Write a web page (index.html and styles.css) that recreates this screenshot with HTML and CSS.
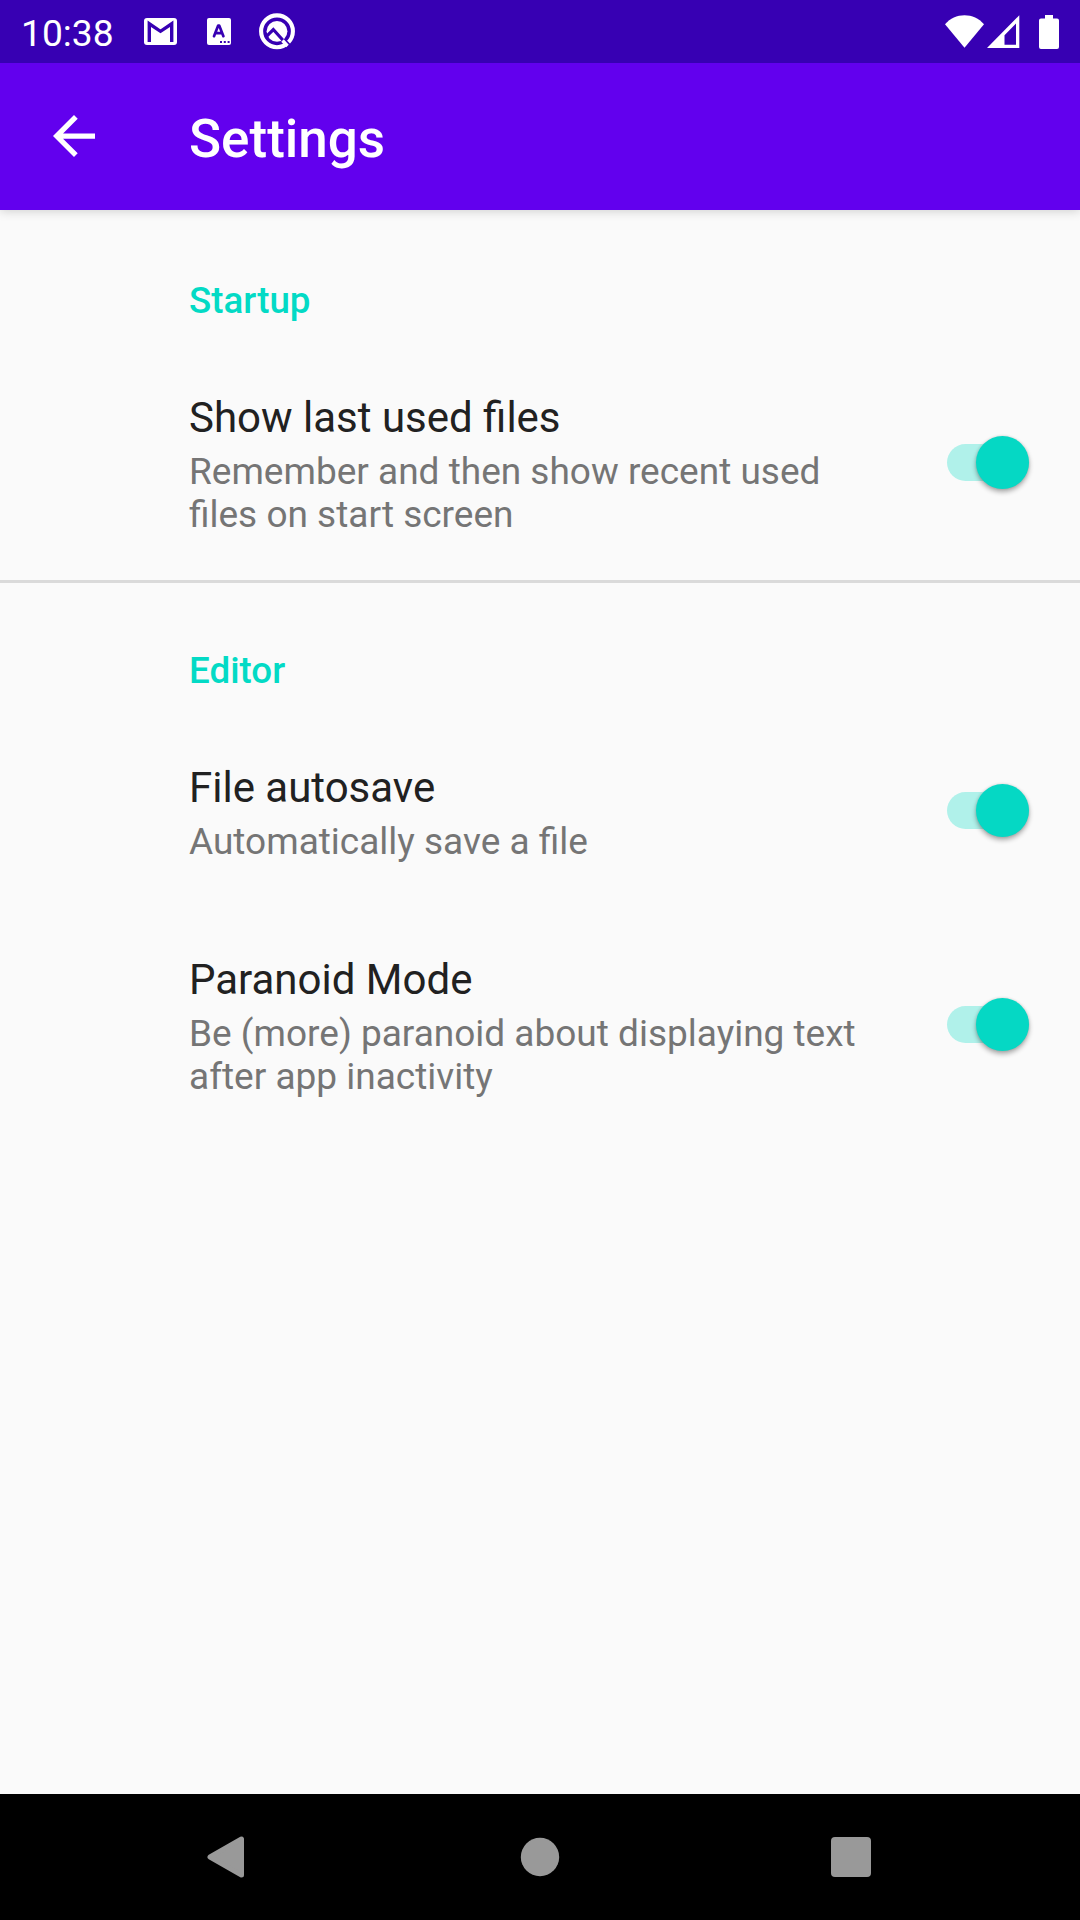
FILE: index.html
```html
<!DOCTYPE html>
<html lang="en">
<head>
<meta charset="utf-8">
<title>Settings</title>
<link rel="stylesheet" href="styles.css">
</head>
<body>
<div class="screen">
  <header class="status">
    <span class="clock">10:38</span>
    <div class="notifications">
      <svg width="33" height="27" viewBox="0 0 33 27">
        <rect width="33" height="27" rx="3" fill="#fff"/>
        <path d="M5.3 24V5.8L16.5 13.3 27.7 5.8V24" fill="none" stroke="#3700b3" stroke-width="3.4"/>
      </svg>
      <svg width="24" height="27" viewBox="0 0 24 27">
        <rect width="24" height="27" rx="2" fill="#fff"/>
        <path d="M7 18.2L11.2 7.5H12.2L16.4 18.2M8.8 15.2H14.6" fill="none" stroke="#3700b3" stroke-width="2.7" stroke-linecap="round" stroke-linejoin="round"/>
        <path d="M13 23h2v2h-2zM16.8 23h2v2h-2zM20.6 23h2v2h-2z" fill="#3700b3"/>
      </svg>
      <svg width="36" height="37" viewBox="0 0 36 37">
        <circle cx="18" cy="18.3" r="15.900" fill="none" stroke="#fff" stroke-width="4.100"/>
        <circle cx="18" cy="18.3" r="10.400" fill="#fff"/>
        <path d="M8 22.800L14.300 16.500 26 29.500" fill="none" stroke="#3700b3" stroke-width="3.200"/>
        <path d="M25 27.500L31.500 34.500" stroke="#3700b3" stroke-width="4.500"/>
        <path d="M23.500 27.500L28.500 33" stroke="#fff" stroke-width="3.400"/>
      </svg>
    </div>
    <div class="system">
      <svg class="wifi" width="39" height="34" viewBox="0 0 39 34">
        <path d="M0 9.200C5.200 3.200 12 .2 19.500 .2S33.800 3.200 39 9.200L19.500 32.800Z" fill="#fff"/>
      </svg>
      <svg class="signal" width="33" height="34" viewBox="0 0 33 34">
        <path d="M32.300 .3V33H0ZM29 8.400L17.500 20.200V29.800H29Z" fill="#fff" fill-rule="evenodd"/>
      </svg>
      <svg class="battery" width="20" height="34" viewBox="0 0 20 34">
        <path d="M6 0H14V3.500H18A2 2 0 0 1 20 5.500V32A2 2 0 0 1 18 34H2A2 2 0 0 1 0 32V5.500A2 2 0 0 1 2 3.500H6Z" fill="#fff"/>
      </svg>
    </div>
  </header>

  <div class="toolbar">
    <svg class="back" width="42" height="42" viewBox="4 4 16 16">
      <path d="M20 11H7.830l5.590-5.590L12 4l-8 8 8 8 1.410-1.410L7.830 13H20v-2z" fill="#fff"/>
    </svg>
    <h1 class="title">Settings</h1>
  </div>

  <main class="content">
    <section class="group">
      <h2 class="category">Startup</h2>
      <div class="item item-tall">
        <div class="text">
          <div class="name">Show last used files</div>
          <div class="summary">Remember and then show recent used<br>files on start screen</div>
        </div>
        <div class="switch"><div class="thumb"></div></div>
      </div>
    </section>
    <section class="group group-divided">
      <h2 class="category">Editor</h2>
      <div class="item">
        <div class="text">
          <div class="name">File autosave</div>
          <div class="summary">Automatically save a file</div>
        </div>
        <div class="switch"><div class="thumb"></div></div>
      </div>
      <div class="item item-tall">
        <div class="text">
          <div class="name">Paranoid Mode</div>
          <div class="summary">Be (more) paranoid about displaying text<br>after app inactivity</div>
        </div>
        <div class="switch"><div class="thumb"></div></div>
      </div>
    </section>
  </main>

  <nav class="navbar">
    <div class="navcell"><svg width="38" height="42" viewBox="0 0 38 42"><path d="M3 21L34.500 3V39Z" fill="#999" stroke="#999" stroke-width="5" stroke-linejoin="round"/></svg></div>
    <div class="navcell"><svg width="40" height="40" viewBox="0 0 40 40"><circle cx="20" cy="20" r="19.200" fill="#999"/></svg></div>
    <div class="navcell"><svg width="40" height="40" viewBox="0 0 40 40"><rect width="40" height="40" rx="4" fill="#999"/></svg></div>
  </nav>
</div>
</body>
</html>
```
FILE: styles.css
```css
* { box-sizing: border-box; margin: 0; padding: 0; }

body {
  font-family: Roboto, "Liberation Sans", sans-serif;
  background: #fafafa;
}

svg { display: block; flex: none; }

.screen {
  width: 1080px;
  height: 1920px;
  display: flex;
  flex-direction: column;
  overflow: hidden;
}

.status {
  height: 63px;
  flex: none;
  display: flex;
  align-items: center;
  padding: 0 21px;
  background: #3700b3;
  color: #fff;
  z-index: 2;
}

.clock {
  width: 123px;
  font-size: 37.2px;
  line-height: 43px;
  padding-top: 3px;
}

.notifications { display: flex; align-items: center; }
.notifications svg + svg { margin-left: 30px; }
.notifications svg:last-child { margin-left: 28px; }

.system { display: flex; align-items: center; margin-left: auto; }
.signal { margin-left: 3px; }
.battery { margin-left: 19px; }

.toolbar {
  height: 147px;
  flex: none;
  display: flex;
  align-items: center;
  padding-left: 53px;
  background: #6200ee;
  color: #fff;
  box-shadow: 0 1px 10px rgba(0, 0, 0, .18);
  z-index: 1;
}

.back { margin-bottom: 1px; }

.title {
  margin-left: 94px;
  padding-top: 4px;
  font-size: 53px;
  font-weight: 500;
  line-height: 62px;
}

.content { flex: 1; }

.group-divided { box-shadow: inset 0 3px #dadada; }

.category {
  height: 134.5px;
  padding: 69px 0 0 189px;
  font-size: 36.75px;
  font-weight: 500;
  line-height: 43px;
  color: #03dac5;
}

.item {
  height: 192.5px;
  display: flex;
  align-items: center;
  justify-content: space-between;
  padding: 0 51px 0 189px;
}

.item-tall { height: 235px; }

.text {
  padding-top: 5px;
  white-space: nowrap;
}

.name {
  font-size: 42px;
  line-height: 50px;
  color: #212121;
}

.summary {
  margin-top: 7px;
  font-size: 37px;
  line-height: 43px;
  color: #757575;
}

.switch {
  width: 82px;
  height: 37px;
  display: flex;
  align-items: center;
  justify-content: flex-end;
  border-radius: 19px;
  background: #b0f1ea;
}

.thumb {
  width: 53px;
  height: 53px;
  flex: none;
  border-radius: 50%;
  background: #05d8c4;
  box-shadow: 0 3px 5px rgba(0, 0, 0, .32), 0 0 3px rgba(0, 0, 0, .12);
}

.navbar {
  height: 126px;
  flex: none;
  display: grid;
  grid-template-columns: 311px 311px 311px;
  justify-content: center;
  background: #000;
}

.navcell { display: flex; align-items: center; justify-content: center; }
.navcell:first-child { padding-right: 7px; }
```
